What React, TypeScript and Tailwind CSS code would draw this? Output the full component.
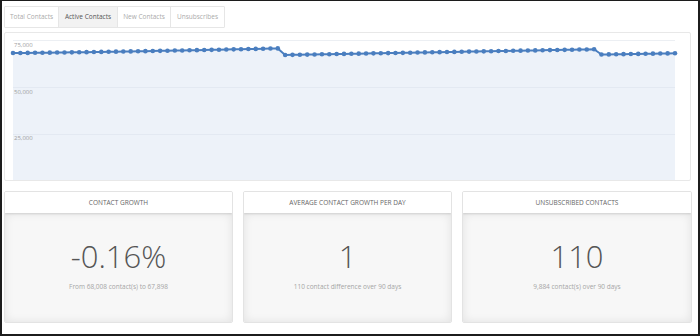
import React from "react";

const W = 685;
const H = 147;

function buildPoints() {
  const pts: { x: number; y: number }[] = [];
  for (let i = 0; i <= 90; i++) {
    let py: number;
    if (i <= 36) {
      py = 53 - 4.6 * Math.pow(i / 36, 1.3);
    } else if (i <= 79) {
      py = 55 - 5.7 * ((i - 37) / 42);
    } else {
      py = 54.5 - 1.2 * ((i - 80) / 10);
    }
    pts.push({ x: 8 + i * (662 / 90), y: py - 33 });
  }
  return pts;
}

function Chart() {
  const pts = buildPoints();
  const line = pts.map((p, i) => `${i === 0 ? "M" : "L"}${p.x.toFixed(2)},${p.y.toFixed(2)}`).join(" ");
  const area = `${line} L${pts[pts.length - 1].x.toFixed(2)},${H} L${pts[0].x.toFixed(2)},${H} Z`;
  return (
    <svg width={W} height={H} viewBox={`0 0 ${W} ${H}`} className="block">
      <line x1={8} x2={670} y1={7.5} y2={7.5} stroke="#eceff3" strokeWidth={1} />
      <path d={area} fill="#edf2f9" />
      <line x1={8} x2={670} y1={54.5} y2={54.5} stroke="#e3e9f2" strokeWidth={1} />
      <line x1={8} x2={670} y1={101.5} y2={101.5} stroke="#e3e9f2" strokeWidth={1} />
      <text x={9} y={14} fontSize={6} fill="#a0a0a0" fontFamily="'Open Sans', sans-serif">75,000</text>
      <text x={9} y={61} fontSize={6} fill="#a0a0a0" fontFamily="'Open Sans', sans-serif">50,000</text>
      <text x={9} y={107} fontSize={6} fill="#a0a0a0" fontFamily="'Open Sans', sans-serif">25,000</text>
      <path d={line} fill="none" stroke="#4a7ebf" strokeWidth={2} strokeLinejoin="round" />
      {pts.map((p, i) => (
        <circle key={i} cx={p.x} cy={p.y} r={2.3} fill="#4a7ebf" />
      ))}
    </svg>
  );
}

function Card({ title, value, sub, width }: { title: string; value: string; sub: string; width: string }) {
  return (
    <div className={`${width} h-[132px] flex flex-col rounded-[2px] border border-[#e3e3e3] overflow-hidden`}>
      <div className="h-[21px] shrink-0 bg-white flex items-center justify-center text-[6.5px] uppercase text-[#666] shadow-[0_1px_2px_rgba(0,0,0,0.12)] z-10">
        {title}
      </div>
      <div className="flex-1 bg-[#f7f7f7] shadow-[inset_0_0_10px_rgba(0,0,0,0.09)] flex flex-col items-center pt-[25px]">
        <div className="text-[31px] leading-[36px] font-light text-[#555]">{value}</div>
        <div className="mt-[8px] text-[6.5px] text-[#a5a5a5]">{sub}</div>
      </div>
    </div>
  );
}

export default function App() {
  return (
    <div
      className="w-[700px] h-[336px] bg-white border-l-2 border-t border-r-2 border-b-2 border-[#1c1c1c] overflow-hidden"
      style={{ fontFamily: "'Open Sans', 'Liberation Sans', sans-serif" }}
    >
      <div className="pl-[2px] pt-[5px] flex">
        <div className="flex h-[22px] border border-[#e6e6e6] rounded-[1px] text-[6.5px] text-[#aaa]">
          <div className="w-[54px] flex items-center justify-center border-r border-[#e6e6e6]">Total Contacts</div>
          <div className="w-[59px] flex items-center justify-center border-r border-[#e6e6e6] bg-[#f2f2f2] text-[#555]">Active Contacts</div>
          <div className="w-[53px] flex items-center justify-center border-r border-[#e6e6e6]">New Contacts</div>
          <div className="w-[53px] flex items-center justify-center">Unsubscribes</div>
        </div>
      </div>
      <div className="ml-[2px] mt-[4px] w-[687px] h-[149px] border border-[#e8e8e8] rounded-[2px] overflow-hidden">
        <Chart />
      </div>
      <div className="flex pl-[2px] mt-[10px] gap-[10px]">
        <Card width="w-[229px]" title="Contact Growth" value="-0.16%" sub="From 68,008 contact(s) to 67,898" />
        <Card width="w-[209px]" title="Average Contact Growth Per Day" value="1" sub="110 contact difference over 90 days" />
        <Card width="w-[230px]" title="Unsubscribed Contacts" value="110" sub="9,884 contact(s) over 90 days" />
      </div>
    </div>
  );
}
